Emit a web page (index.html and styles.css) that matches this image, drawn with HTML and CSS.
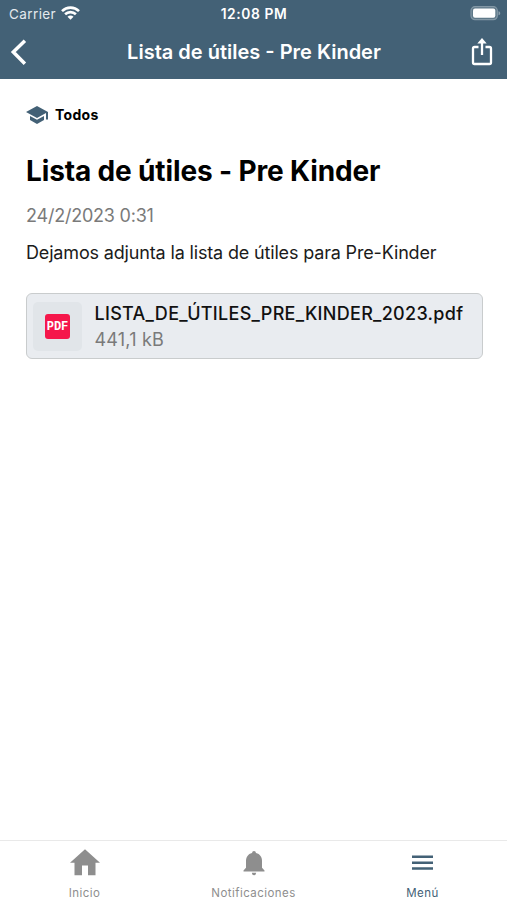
FILE: index.html
```html
<!DOCTYPE html>
<html lang="es">

<head>
    <meta charset="UTF-8">
    <meta name="viewport" content="width=device-width, initial-scale=1.0">
    <title>Lista de útiles - Pre Kinder</title>

    <link rel="stylesheet" href="styles.css">
</head>

<body>

    <!-- Status bar and title -->
    <header class="header">
        <div class="status-bar">
            <div class="carrier">
                <span>Carrier</span>
                <svg width="19" height="15" viewBox="0 0 19 15" fill="none" stroke="#fff" stroke-width="2.6">
                    <path d="M1 5.1C5.8.4 13.2.4 18 5.1" />
                    <path d="M4.1 8.3C7.1 5.4 11.9 5.4 14.9 8.3" />
                    <path d="M9.5 13.7L6.5 10.7C8.2 9.2 10.8 9.2 12.5 10.7Z" fill="#fff" stroke="none" />
                </svg>
            </div>
            <span class="time">12:08 PM</span>
            <svg class="battery" width="31" height="15" viewBox="0 0 31 15">
                <rect x="1" y="0.7" width="26.3" height="13" rx="4" fill="#5f7989" stroke="#8398a6" stroke-width="1.2" />
                <rect x="3" y="2.6" width="22.3" height="9.2" rx="2" fill="#fff" />
                <path d="M28.5 5.2C30.8 5.8 30.8 8.7 28.5 9.3Z" fill="#8b9eab" />
            </svg>
        </div>
        <div class="navbar">
            <svg width="18" height="28" viewBox="0 0 18 28" fill="none" stroke="#fff" stroke-width="3.5">
                <path d="M15.9 2.7L4.3 14L15.9 25.8" />
            </svg>
            <h2>Lista de útiles - Pre Kinder</h2>
            <svg width="22" height="28" viewBox="0 0 22 28" fill="none" stroke="#fff" stroke-width="2.3" stroke-linejoin="round">
                <path d="M7.5 9H3.5Q2 9 2 10.5V24.5Q2 26 3.5 26H18.5Q20 26 20 24.5V10.5Q20 9 18.5 9H14.5" />
                <path d="M11 17V4" />
                <path d="M11 0L15.7 5.5H6.3Z" fill="#fff" stroke="none" />
            </svg>
        </div>
    </header>

    <!-- Post content -->
    <main class="content">
        <div class="audience">
            <svg width="22" height="18" viewBox="0 0 22 18" fill="#436176">
                <path d="M11 0L22 6V13.5H20V7.1L11 12L0 6Z" />
                <path d="M4 10V14L11 18L18 14V10L11 13.8Z" />
            </svg>
            <span>Todos</span>
        </div>
        <h1>Lista de útiles - Pre Kinder</h1>
        <p class="date">24/2/2023 0:31</p>
        <p class="text">Dejamos adjunta la lista de útiles para Pre-Kinder</p>

        <div class="attachment">
            <div class="file-icon"><span>PDF</span></div>
            <div class="file-info">
                <p class="file-name">LISTA_DE_ÚTILES_PRE_KINDER_2023.pdf</p>
                <p class="file-size">441,1 kB</p>
            </div>
        </div>
    </main>

    <!-- Bottom tabs -->
    <nav class="tabs">
        <div class="tab">
            <svg width="32" height="28" viewBox="0 0 32 28" fill="#8e8e8e">
                <path d="M16 .2L31 13.8H26.5V26.3H19V16.5H13V26.3H5.5V13.8H1Z" />
            </svg>
            <span>Inicio</span>
        </div>
        <div class="tab">
            <svg width="22" height="28" viewBox="0 0 22 28" fill="#8e8e8e">
                <path d="M11 2Q12.8 2 13 4C17 5 19 8 19 12V18.7L21.5 21.5V22.5H.5V21.5L3 18.7V12C3 8 5 5 9 4Q9.2 2 11 2Z" />
                <path d="M8.8 23.8H13.2Q12.9 26.3 11 26.3T8.8 23.8Z" />
            </svg>
            <span>Notificaciones</span>
        </div>
        <div class="tab active">
            <svg width="22" height="28" viewBox="0 0 22 28" fill="#436176">
                <path d="M0 6.5H21V9H0ZM0 12.5H21V15H0ZM0 18.3H21V20.8H0Z" />
            </svg>
            <span>Menú</span>
        </div>
    </nav>

</body>

</html>
```
FILE: styles.css
```css
* {
    margin: 0;
    padding: 0;
    box-sizing: border-box;
}

body {
    height: 100vh;
    display: flex;
    flex-direction: column;
    overflow: hidden;
    font-family: Inter, "Liberation Sans", sans-serif;
    background-color: #fff;
    color: #000;
}

svg {
    display: block;
    flex: none;
}

h1, h2, p, span {
    white-space: nowrap;
}

/* Header */
.header {
    height: 79px;
    background-color: #436176;
    color: #fff;
}

.status-bar {
    height: 27px;
    padding: 0 6px 0 9px;
    display: grid;
    grid-template-columns: 1fr auto 1fr;
    align-items: center;
    font-size: 13.5px;
}

.carrier {
    display: flex;
    align-items: center;
    gap: 5px;
    color: #e3e9ed;
    letter-spacing: 0.4px;
}

.time {
    font-size: 13.8px;
    font-weight: 600;
    letter-spacing: 0.6px;
    margin-right: 2px;
}

.battery {
    justify-self: end;
}

.navbar {
    height: 50px;
    padding: 0 14px 0 9px;
    display: grid;
    grid-template-columns: 22px 1fr 22px;
    align-items: center;
}

.navbar h2 {
    font-size: 20px;
    font-weight: 600;
    text-align: center;
    padding-left: 6px;
}

/* Content */
.content {
    flex: 1;
    padding: 27px 24px 0 26px;
}

.audience {
    height: 18px;
    display: flex;
    align-items: center;
    gap: 7px;
    font-size: 14px;
    font-weight: 700;
    line-height: 18px;
    letter-spacing: 0.3px;
}

h1 {
    margin-top: 29px;
    font-size: 28px;
    font-weight: 700;
    line-height: 36px;
    letter-spacing: -0.14px;
}

.date {
    margin-top: 15px;
    font-size: 18px;
    line-height: 24px;
    letter-spacing: -0.22px;
    color: #7a7a7a;
}

.text {
    margin-top: 13px;
    font-size: 18px;
    line-height: 24px;
    letter-spacing: -0.16px;
    color: #1b1b1b;
}

.attachment {
    margin-top: 28px;
    height: 66px;
    padding: 0 6px;
    display: flex;
    align-items: center;
    gap: 12.5px;
    background-color: #e9ecf0;
    border: 1.5px solid #c9cccd;
    border-radius: 6px;
}

.file-icon {
    width: 49px;
    height: 49px;
    flex: none;
    display: flex;
    align-items: center;
    justify-content: center;
    background-color: #e1e5e9;
    border-radius: 5px;
}

.file-icon span {
    width: 25px;
    height: 25px;
    border-radius: 3px;
    background-color: #f5174b;
    color: #fff;
    font-family: "Liberation Mono", monospace;
    font-size: 12px;
    font-weight: 700;
    line-height: 26px;
    text-align: center;
}

.file-info {
    padding-top: 2px;
}

.file-name {
    font-size: 18px;
    font-weight: 500;
    line-height: 26px;
    letter-spacing: 0.29px;
    color: #111;
}

.file-size {
    font-size: 18px;
    line-height: 26px;
    letter-spacing: 0.2px;
    color: #7a7a7a;
}

/* Bottom tabs */
.tabs {
    height: 60px;
    padding-top: 8px;
    display: grid;
    grid-template-columns: repeat(3, 1fr);
    border-top: 1px solid #e9e9e9;
}

.tab {
    display: flex;
    flex-direction: column;
    align-items: center;
    gap: 8px;
    font-size: 11.5px;
    line-height: 16px;
    letter-spacing: 0.45px;
    color: #8e8e8e;
}

.active {
    color: #436176;
}
```
